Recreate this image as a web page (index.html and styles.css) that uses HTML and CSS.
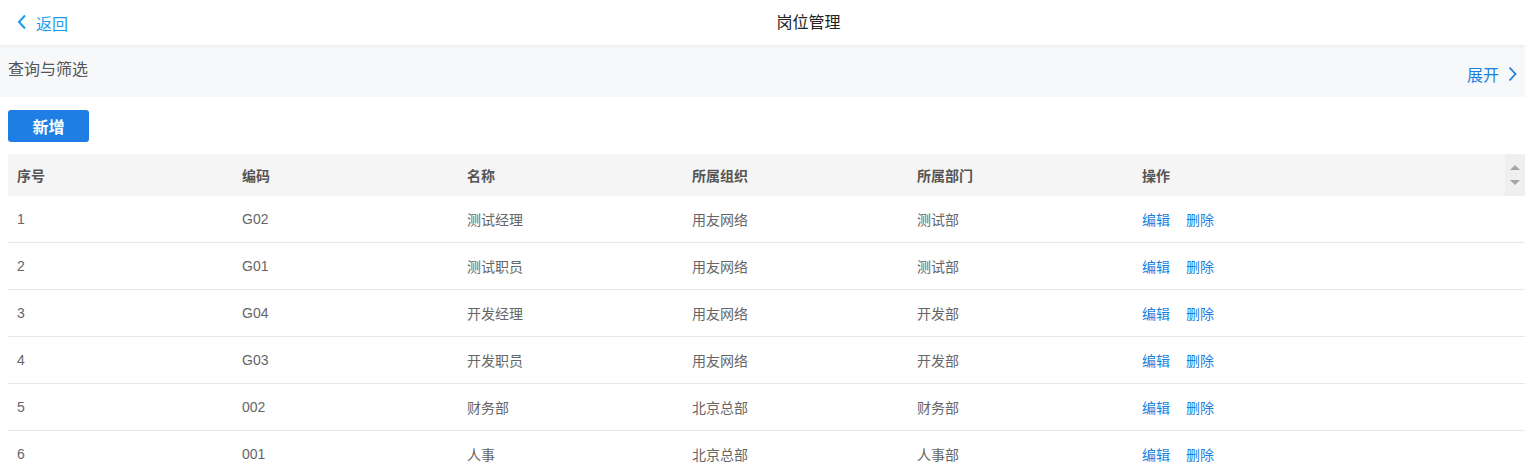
FILE: index.html
```html
<!DOCTYPE html>
<html lang="zh">
<head>
<meta charset="utf-8">
<link rel="stylesheet" href="styles.css">
</head>
<body>
<header class="topbar">
  <a class="back">
    <svg class="back-icon" width="10" height="16" viewBox="0 0 10 16"><path d="M8 1.5 L2 8 L8 14.5" fill="none" stroke="currentColor" stroke-width="2"/></svg>
    <span>返回</span>
  </a>
  <h1 class="title">岗位管理</h1>
</header>
<section class="filter">
  <span class="filter-label">查询与筛选</span>
  <a class="expand">展开
    <svg width="9" height="16" viewBox="0 0 9 16"><path d="M1.5 1.5 L7.5 8 L1.5 14.5" fill="none" stroke="currentColor" stroke-width="1.8"/></svg>
  </a>
</section>
<div class="toolbar">
  <button class="btn-primary">新增</button>
</div>
<div class="table">
  <div class="thead">
    <div class="row head-row">
      <div class="cell">序号</div>
      <div class="cell">编码</div>
      <div class="cell">名称</div>
      <div class="cell">所属组织</div>
      <div class="cell">所属部门</div>
      <div class="cell op">操作</div>
    </div>
    <div class="gutter">
      <span class="tri up"></span>
      <span class="tri down"></span>
    </div>
  </div>
  <div class="tbody">
    <div class="row body-row">
      <div class="cell">1</div><div class="cell">G02</div><div class="cell">测试经理</div><div class="cell">用友网络</div><div class="cell">测试部</div>
      <div class="cell op"><a class="link">编辑</a><a class="link">删除</a></div>
    </div>
    <div class="row body-row">
      <div class="cell">2</div><div class="cell">G01</div><div class="cell">测试职员</div><div class="cell">用友网络</div><div class="cell">测试部</div>
      <div class="cell op"><a class="link">编辑</a><a class="link">删除</a></div>
    </div>
    <div class="row body-row">
      <div class="cell">3</div><div class="cell">G04</div><div class="cell">开发经理</div><div class="cell">用友网络</div><div class="cell">开发部</div>
      <div class="cell op"><a class="link">编辑</a><a class="link">删除</a></div>
    </div>
    <div class="row body-row">
      <div class="cell">4</div><div class="cell">G03</div><div class="cell">开发职员</div><div class="cell">用友网络</div><div class="cell">开发部</div>
      <div class="cell op"><a class="link">编辑</a><a class="link">删除</a></div>
    </div>
    <div class="row body-row">
      <div class="cell">5</div><div class="cell">002</div><div class="cell">财务部</div><div class="cell">北京总部</div><div class="cell">财务部</div>
      <div class="cell op"><a class="link">编辑</a><a class="link">删除</a></div>
    </div>
    <div class="row body-row">
      <div class="cell">6</div><div class="cell">001</div><div class="cell">人事</div><div class="cell">北京总部</div><div class="cell">人事部</div>
      <div class="cell op"><a class="link">编辑</a><a class="link">删除</a></div>
    </div>
  </div>
</div>
</body>
</html>
```
FILE: styles.css
```css
* { box-sizing: border-box; }
html, body { margin: 0; padding: 0; background: #fff; overflow: hidden; }
body {
  font-family: "Liberation Sans", "Noto Sans CJK SC", sans-serif;
  color: #333;
  height: 471px;
}
.topbar {
  height: 45px;
  display: flex;
  align-items: center;
  justify-content: center;
  position: relative;
  background: #fff;
  box-shadow: 0 1px 3px rgba(0,0,0,0.12);
  z-index: 1;
}
.back {
  position: absolute;
  left: 17px;
  top: 0;
  height: 45px;
  display: flex;
  align-items: center;
  gap: 9px;
  color: #1a9bef;
  font-size: 16px;
}
.back-icon { margin-top: -1px; }
.title {
  margin: 0;
  font-size: 16px;
  font-weight: normal;
  color: #222;
  padding-left: 92px;
  margin-top: -4px;
}
.filter {
  height: 50px;
  margin-top: 2px;
  background: #f7f8fa;
  display: flex;
  justify-content: space-between;
  padding: 12px 8px 0 8px;
}
.filter-label { font-size: 16px; color: #555; line-height: 22px; }
.expand {
  color: #1a7fe0;
  font-size: 16px;
  display: flex;
  align-items: center;
  gap: 9px;
  height: 22px;
  margin-top: 4px;
}
.toolbar { padding: 13px 8px 12px; }
.btn-primary {
  width: 81px;
  height: 32px;
  border: 0;
  border-radius: 3px;
  background: #1e7ee4;
  color: #fff;
  font-family: inherit;
  font-size: 16px;
  font-weight: bold;
  padding: 0;
}
.table { margin: 0 0 0 8px; }
.thead {
  display: flex;
  background: #f5f5f5;
  height: 42px;
}
.row { display: flex; flex: 1; }
.cell {
  width: 225px;
  flex: none;
  padding-left: 9px;
  font-size: 14px;
  display: flex;
  align-items: center;
}
.cell.op { flex: 1; width: auto; gap: 16px; }
.head-row .cell { font-weight: bold; color: #555; }
.gutter {
  width: 20px;
  background: #efefef;
  display: flex;
  flex-direction: column;
  align-items: center;
  justify-content: center;
  gap: 10px;
}
.tri { width: 0; height: 0; border-left: 5px solid transparent; border-right: 5px solid transparent; }
.tri.up { border-bottom: 5px solid #a5a5a5; }
.tri.down { border-top: 5px solid #a5a5a5; }
.body-row {
  height: 47px;
  border-bottom: 1px solid #e8e8e8;
  color: #666;
}
.body-row .cell { color: #666; padding-bottom: 1px; }
.link { color: #1a7fe0; font-size: 14px; }
```
